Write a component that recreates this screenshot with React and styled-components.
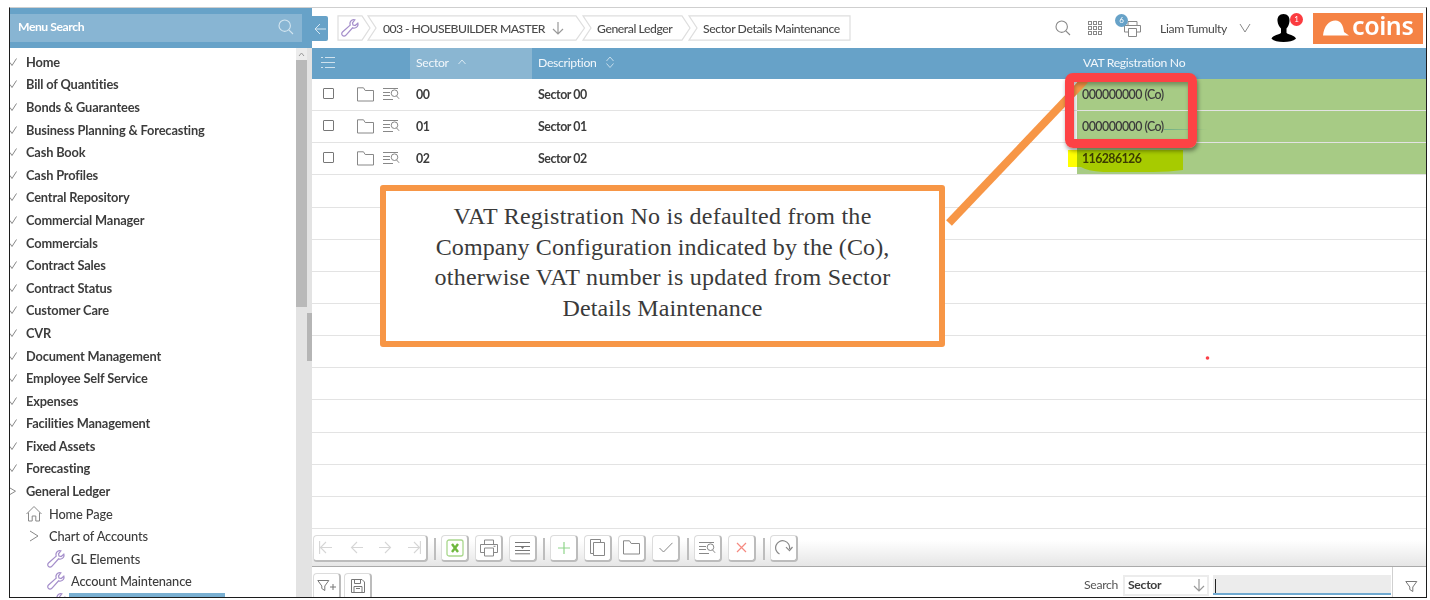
import React from "react";
import styled, { createGlobalStyle, css } from "styled-components";

const Global = createGlobalStyle`
  * { box-sizing: border-box; }
  body { margin: 0; background: #fff; overflow: hidden; }
`;

const blue = "#67a2c8";

const Page = styled.div`
  position: relative;
  width: 1430px;
  height: 600px;
  padding: 7px 3px 2px 9px;
  background: #fff;
  font-family: Lato, "Liberation Sans", sans-serif;
  font-size: 12.8px;
  color: #3c3c3c;
`;
const Frame = styled.div`
  display: flex;
  width: 1418px;
  height: 591px;
  border: 1px solid #1c1c1c;
  border-top-color: #cfcfcf;
  overflow: hidden;
`;
const Sidebar = styled.aside`
  width: 302px;
  flex: none;
  display: flex;
  flex-direction: column;
`;
const SearchHead = styled.div`
  flex: none;
  height: 40px;
  background: ${blue};
  padding: 6px 10px 6px 0;
`;
const SearchBox = styled.div`
  height: 28px;
  background: #88b5d3;
  color: #fff;
  font-weight: 700;
  font-size: 12.2px;
  letter-spacing: -0.45px;
  display: flex;
  align-items: center;
  justify-content: space-between;
  padding: 0 8px 3px 8px;
`;
const MenuBody = styled.div`
  flex: 1;
  min-height: 0;
  display: flex;
`;
const Menu = styled.nav`
  flex: 1;
  padding-top: 2.500px;
  overflow: hidden;
`;
const MenuItem = styled.div`
  height: 22.6px;
  display: flex;
  align-items: center;
  white-space: nowrap;
  font-weight: ${(p) => (p.$depth ? 500 : 700)};
  letter-spacing: ${(p) => (p.$depth ? "-0.13px" : "-0.15px")};
  padding-left: ${(p) => [0, 15, 37][p.$depth]}px;
`;
const MenuIcon = styled.span`
  flex: none;
  width: ${(p) => (p.$depth ? 24 : 16)}px;
  display: flex;
  align-items: center;
`;
const SelectedRow = styled.div`
  display: flex;
  align-items: flex-start;
  padding-left: 38px;
`;
const Selected = styled.div`
  width: 156px;
  height: 10px;
  margin-left: 3px;
  background: #7ab0d2;
`;
const Scroll = styled.div`
  width: 16px;
  background: #e3e3e3;
  display: flex;
  flex-direction: column;
`;
const ScrollUp = styled.div`
  width: 11px;
  height: 12px;
  background: #ececec;
  display: flex;
  align-items: center;
  justify-content: center;
`;
const Thumb = styled.div`
  width: 11px;
  height: 247px;
  background: #b9b9b9;
`;
const Handle = styled.div`
  width: 5px;
  height: 48px;
  margin: 6px 0 0 11px;
  background: #b5b5b5;
`;
const Main = styled.main`
  flex: 1;
  min-width: 0;
  display: flex;
  flex-direction: column;
`;
const TopBar = styled.header`
  flex: none;
  height: 40px;
  display: flex;
  align-items: flex-start;
  padding-top: 7px;
`;
const Back = styled.div`
  width: 16px;
  height: 25px;
  margin-top: 1px;
  background: ${blue};
  border-radius: 0 2px 2px 0;
  display: flex;
  align-items: center;
  justify-content: center;
`;
const Crumbs = styled.div`
  position: relative;
  width: 514px;
  height: 26px;
  margin-left: 9px;
  display: flex;
  align-items: center;
  font-size: 12.2px;
  white-space: nowrap;
  color: #4a4a4a;
`;
const CrumbLines = styled.svg`
  position: absolute;
  inset: 0;
`;
const Crumb = styled.span`
  display: flex;
  align-items: center;
  gap: 7px;
  width: ${(p) => p.$w}px;
  padding-left: ${(p) => p.$pad || 0}px;
  letter-spacing: ${(p) => p.$ls || 0}px;
  font-weight: 500;
`;
const TopRight = styled.div`
  margin-left: auto;
  height: 26px;
  display: flex;
  align-items: center;
  padding-right: 3px;
`;
const IconSlot = styled.span`
  position: relative;
  display: flex;
  flex: none;
  margin-left: ${(p) => p.$ml || 0}px;
`;
const Badge = styled.span`
  position: absolute;
  left: ${(p) => p.$x}px;
  top: ${(p) => p.$y}px;
  width: 13px;
  height: 13px;
  border-radius: 50%;
  background: ${(p) => p.$bg};
  color: #fff;
  font-size: 8px;
  line-height: 13px;
  text-align: center;
`;
const UserName = styled.span`
  margin-left: 19px;
  width: 68px;
  white-space: nowrap;
  font-size: 12.2px;
  letter-spacing: -0.35px;
  color: #4a4a4a;
`;
const Logo = styled.div`
  width: 110px;
  height: 31px;
  margin-left: 17px;
  background: #f58345;
  display: flex;
  align-items: center;
  padding-left: 10px;
  color: #fff;
  font-family: "Noto Sans", sans-serif;
  font-weight: 600;
  font-size: 25px;
  line-height: 25px;
  letter-spacing: -0.4px;
  gap: 2px;
`;
const LogoText = styled.span`
  height: 31px;
`;
const cols = "98px 122px 545px 1fr";
const HeadRow = styled.div`
  flex: none;
  height: 31px;
  display: grid;
  grid-template-columns: ${cols};
  background: ${blue};
  color: #f2f7fb;
  font-size: 12.2px;
  letter-spacing: -0.3px;
`;
const HeadCell = styled.div`
  display: flex;
  align-items: center;
  gap: 9px;
  padding: 0 0 3px 6px;
  background: ${(p) => (p.$on ? "#8ab6d2" : "transparent")};
`;
const Row = styled.div`
  flex: none;
  height: 32.15px;
  display: grid;
  grid-template-columns: ${cols};
  border-bottom: 1px solid #e3e3e3;
  font-weight: 700;
  font-size: 12.4px;
`;
const Cell = styled.div`
  display: flex;
  align-items: center;
  padding: 0 0 0.500px 6px;
  letter-spacing: -0.45px;
  ${(p) => p.$green && css`
    background: #a7cb85;
    padding-left: 5px;
    font-weight: ${p.$b ? 700 : 600};
    letter-spacing: ${p.$b ? -0.6 : -0.53}px;
  `}
`;
const IconCell = styled.div`
  display: flex;
  align-items: center;
  padding: 0 0 1px 11px;
`;
const Check = styled.span`
  width: 11px;
  height: 11px;
  margin: 0 23px 2px 0;
  border: 1px solid #777;
  border-radius: 1px;
`;
const Toolbar = styled.div`
  flex: none;
  height: 38px;
  padding: 6px 0 0 1px;
  border-bottom: 1px solid #aaa;
  background: linear-gradient(#fff 30%, #e6e6e6);
  display: flex;
  align-items: flex-start;
`;
const Btn = styled.span`
  width: ${(p) => p.$w || 28}px;
  height: 27px;
  margin-right: ${(p) => (p.$mr === undefined ? 6 : p.$mr)}px;
  flex: none;
  display: flex;
  align-items: center;
  justify-content: center;
  background: #fff;
  border: 1px solid #dcdcdc;
  border-right: 2px solid #bcbcbc;
  border-bottom: 2px solid #bcbcbc;
  border-radius: 4px;
`;
const Sep = styled.i`
  width: 2px;
  height: 22px;
  margin: 3px 5px 0 0;
  background: #bdbdbd;
`;
const FilterBar = styled.div`
  flex: 1;
  display: flex;
  padding: 6px 0 0 1px;
`;
const SearchLabel = styled.span`
  margin-left: auto;
  width: 39px;
  padding-top: 4.500px;
  font-size: 12.2px;
  letter-spacing: -0.3px;
  color: #555;
`;
const Select = styled.span`
  width: 86px;
  height: 21px;
  margin-top: 2px;
  border: 2px solid #ececec;
  display: flex;
  align-items: center;
  justify-content: space-between;
  padding: 0 2px 1px 3px;
  font-size: 12.2px;
  font-weight: 700;
  letter-spacing: -0.3px;
`;
const Input = styled.span`
  width: 178px;
  height: 20px;
  margin: 2px 1px 0 4px;
  padding: 4px 2px;
  background: #ececec;
  border-bottom: 2px solid #70a9d0;
`;
const Caret = styled.i`
  display: block;
  width: 1px;
  height: 14px;
  background: #222;
`;
const FilterCell = styled.span`
  width: 34px;
  margin-top: -6px;
  border-left: 1px solid #d0d0d0;
  display: flex;
  align-items: center;
  justify-content: center;
  padding: 6px 0 0 4px;
`;
const Callout = styled.div`
  position: absolute;
  left: 380px;
  top: 185px;
  width: 565px;
  height: 162px;
  border: 6px solid #f79646;
  border-radius: 3px;
  background: #fff;
  padding-top: 10px;
  text-align: center;
  font: 24px/30.7px "Liberation Serif", serif;
  color: #3a3a3a;
`;
const Line = styled.div`
  white-space: nowrap;
  letter-spacing: ${(p) => p.$ls || 0}px;
`;
const Ink = styled.svg`
  position: absolute;
  left: 0;
  top: 0;
  pointer-events: none;
  mix-blend-mode: ${(p) => (p.$mul ? "multiply" : "normal")};
`;
const RedBox = styled.div`
  position: absolute;
  left: 1065px;
  top: 73px;
  width: 132px;
  height: 75px;
  border: 9px solid #fd4245;
  border-radius: 8px;
  box-shadow: 1px 3px 4px rgba(0,0,0,.4), inset 1px 3px 4px rgba(0,0,0,.3);
`;

const I = ({ w = 16, h = w, c = "#888", s = 1, vb, children }) => (
  <svg width={w} height={h} viewBox={vb || `0 0 ${w} ${h}`} fill="none" stroke={c} strokeWidth={s}>
    {children}
  </svg>
);
const Search = ({ c }) => <I w={16} c={c} s={1.1}><circle cx="6.7" cy="6.7" r="5.7" /><path d="M10.8 10.8L15 15" /></I>;
const Wrench = ({ w = 18 }) => (
  <I w={w} vb="0 0 18 18" c="#a58fcb" s={1.25}>
    <path d="M16.8 4.200l-2.600 2.300-2.200-.5-.5-2.200L13.800.9C11.600.3 9.400 1.600 9 3.900c-.1.8 0 1.500.2 2.200L1.500 13c-1 1-1 2.500-.1 3.400.9.9 2.400.9 3.400-.1l6.800-7.500c.8.3 1.500.3 2.300.2 2.300-.5 3.600-2.600 2.900-4.800z" />
  </I>
);
const Folder = () => <I w={17} h={15}><path d="M.5 14V.8h6l1.700 2.700h8.300V14z" /></I>;
const Detail = () => <I w={17} h={14}><path d="M0 1.500h15M0 5.500h7M0 8.500h7M0 12.500h10M13.600 9l2.500 2.800" /><circle cx="11.500" cy="6.200" r="3.300" /></I>;
const Printer = () => <I w={18} h={18}><path d="M4.500 5V1h9v4M4.500 13.500h-4V5.500h17v8h-4M4.500 9h9v8h-9zM13.500 7.300h2" /></I>;
const Down = ({ c = "#999" }) => <I w={12} h={14} c={c} s={1.2}><path d="M6 1v12M1 8l5 5 5-5" /></I>;
const Arrow = ({ flip, bar }) => (
  <I w={13} h={15} c="#d6d6d6" s={1.1}>
    <g transform={flip ? "translate(13 0) scale(-1 1)" : undefined}><path d={`M13 7.500H2M7 2L1.500 7.500 7 13${bar ? "M.6 1v13" : ""}`} /></g>
  </I>
);
const Funnel = ({ w = 13 }) => <I w={w} h={13} c="#777"><path d="M.8 1.500h11L7.800 7v4.500l-3-2V7z" />{w > 13 && <path d="M13 8h6M16 5v6" />}</I>;

const top = ["Home", "Bill of Quantities", "Bonds & Guarantees", "Business Planning & Forecasting", "Cash Book", "Cash Profiles", "Central Repository", "Commercial Manager", "Commercials", "Contract Sales", "Contract Status", "Customer Care", "CVR", "Document Management", "Employee Self Service", "Expenses", "Facilities Management", "Fixed Assets", "Forecasting", "General Ledger"];

const rows = [["00", "000000000 (Co)"], ["01", "000000000 (Co)"], ["02", "116286126"]];

export default function App() {
  return (
    <Page>
      <Global />
      <Frame>
        <Sidebar>
          <SearchHead><SearchBox>Menu Search<Search c="#d3e5f0" /></SearchBox></SearchHead>
          <MenuBody>
            <Menu>
              {top.map((t, i) => (
                <MenuItem key={t} $depth={0}>
                  <MenuIcon $depth={0}>
                    <I w={8} h={10}>{i === 19 ? <path d="M0 2l5.500 3.200L0 8.500" /> : <path d="M0 5.500l2 3L6.500 1.500" />}</I>
                  </MenuIcon>
                  {t}
                </MenuItem>
              ))}
              <MenuItem $depth={1}>
                <MenuIcon $depth={1}><I w={18} h={17}><path d="M1.500 9L9 1.500 16.500 9M3.500 7.500V16h3.700v-5h3.600v5h3.700V7.500" /></I></MenuIcon>Home Page
              </MenuItem>
              <MenuItem $depth={1}>
                <MenuIcon $depth={1}><I w={16} h={12}><path d="M5 1l8 5-8 5" /></I></MenuIcon>Chart of Accounts
              </MenuItem>
              <MenuItem $depth={2}><MenuIcon $depth={2}><Wrench /></MenuIcon>GL Elements</MenuItem>
              <MenuItem $depth={2}><MenuIcon $depth={2}><Wrench /></MenuIcon>Account Maintenance</MenuItem>
              <SelectedRow><Wrench /><Selected /></SelectedRow>
            </Menu>
            <Scroll>
              <ScrollUp><I w={7} h={5} c="#999"><path d="M1 4l2.500-3L6 4" /></I></ScrollUp>
              <Thumb />
              <Handle />
            </Scroll>
          </MenuBody>
        </Sidebar>
        <Main>
          <TopBar>
            <Back><I w={12} c="#d7e8f2"><path d="M12 6H1.500M6 1L1 6l5 5" /></I></Back>
            <Crumbs>
              <CrumbLines width="514" height="26" fill="none" stroke="#dedede" strokeWidth="1.2">
                <path d="M1 .8h24l8 12.200-8 12.200H1zM31 .8h208l8.500 12.200-8.500 12.200H31l8-12.200zM246 .8h99l8 12.200-8 12.200h-99l8-12.200zM352 .8h161v24.400H352l8-12.200z" />
              </CrumbLines>
              <Crumb $w={46} $pad={4}><Wrench /></Crumb>
              <Crumb $w={214} $ls={-0.55}>003 - HOUSEBUILDER MASTER<Down /></Crumb>
              <Crumb $w={106} $ls={-0.43}>General Ledger</Crumb>
              <Crumb $w={140} $ls={-0.41}>Sector Details Maintenance</Crumb>
            </Crumbs>
            <TopRight>
              <Search />
              <IconSlot $ml={17}>
                <I w={16} c="#888">
                  {[0, 1, 2].map((y) => [0, 1, 2].map((x) => <rect key={`${x}${y}`} x={x * 5 + 0.500} y={y * 5 + 1.500} width="3" height="3" />))}
                </I>
              </IconSlot>
              <IconSlot $ml={20}>
                <I w={17} h={17}><path d="M4 5V1.500h9V5M4 12H.5V5.500h16V12H13M4.500 8.500h8v8h-8z" /></I>
                <Badge $bg={blue} $x={-9} $y={-6}>6</Badge>
              </IconSlot>
              <UserName>Liam Tumulty</UserName>
              <IconSlot $ml={11}><I w={12} h={10}><path d="M1 1l5 8 5-8" /></I></IconSlot>
              <IconSlot $ml={20}>
                <svg width="25" height="28" viewBox="0 0 25 28"><path d="M12.500 0c4.200 0 6.300 3 6 7-.2 3-1.300 5.800-3 7.500v4.200c1 2 8.500 2.300 9.500 6C22 27 18 28 12.500 28S3 27 .500 24.700c1-3.700 8.500-4 9.500-6v-4.200C8.300 12.800 6.700 10 6.500 7c-.3-4 1.800-7 6-7z" fill="#000" /></svg>
                <Badge $bg="#fb3b3f" $x={19} $y={-1}>1</Badge>
              </IconSlot>
              <Logo>
                <svg width="27" height="17" viewBox="0 0 27 17"><path d="M0 15.500C1 6 6 .500 12.500.500 18 .500 20.500 6 21 12l5 3.500z" fill="#fff" /></svg>
                <LogoText>coins</LogoText>
              </Logo>
            </TopRight>
          </TopBar>
          <HeadRow>
            <HeadCell><I w={20} h={14} c="#cfe2ee"><path d="M3 2.500h2M7 2.500h10M3 7.500h14M3 12.500h2M7 12.500h10" /></I></HeadCell>
            <HeadCell $on>Sector<I w={8} h={6} c="#d8e8f2"><path d="M.5 5L4 1l3.500 4" /></I></HeadCell>
            <HeadCell>Description<I w={8} h={12} c="#c5dcea"><path d="M.5 5L4 1l3.500 4M.5 7.500l3.500 4 3.500-4" /></I></HeadCell>
            <HeadCell>VAT Registration No</HeadCell>
          </HeadRow>
          {rows.map(([n, v], i) => (
            <Row key={n}>
              <IconCell><Check /><Folder /><IconSlot $ml={9}><Detail /></IconSlot></IconCell>
              <Cell>{n}</Cell>
              <Cell>Sector {n}</Cell>
              <Cell $green $b={i === 2}>{v}</Cell>
            </Row>
          ))}
          {Array.from({ length: 11 }, (_, i) => <Row key={i} />)}
          <Toolbar>
            <Btn $w={115}>
              <Arrow bar /><IconSlot $ml={18}><Arrow /></IconSlot><IconSlot $ml={16}><Arrow flip /></IconSlot><IconSlot $ml={16}><Arrow flip bar /></IconSlot>
            </Btn>
            <Sep />
            <Btn><I w={18} c="#a9d78d" s={1.3}><rect x="1" y="1" width="16" height="16" rx="2" /><path d="M6 5l6 8M12 5l-6 8" stroke="#6fb83e" strokeWidth="2.400" /></I></Btn>
            <Btn><Printer /></Btn>
            <Btn><I w={15} h={14} c="#777"><path d="M0 1.500h15M0 5.500h15M0 9.500h15M0 12.800h15" /><path d="M5.500 5.500h4l-2 2.500z" fill="#777" stroke="none" /></I></Btn>
            <Sep />
            <Btn><I w={12} c="#8fd58b" s={1.2}><path d="M6 0v12M0 6h12" /></I></Btn>
            <Btn><I w={16} h={18}><path d="M3.500 14.500H.500V.500h10v3M3.500 3.500h11v13h-11z" /></I></Btn>
            <Btn><Folder /></Btn>
            <Btn $mr={7}><I w={14} h={11}><path d="M.5 6l4 4L13.500.800" /></I></Btn>
            <Sep />
            <Btn><Detail /></Btn>
            <Btn $mr={7}><I w={11} c="#f58a80" s={1.2}><path d="M1 1l9 9M10 1L1 10" /></I></Btn>
            <Sep />
            <Btn><I w={19} h={16} s={1.2}><path d="M5.500 14A7 7 0 1 1 15.500 9M12 7.200l3.500 3.500L18.500 7" /></I></Btn>
          </Toolbar>
          <FilterBar>
            <Btn $mr={3}><Funnel w={19} /></Btn>
            <Btn><I w={14} h={14} c="#777"><path d="M.5.500H11l2.500 2.500v10.500H.500zM3.500.500v4h6v-4M3 13.500v-6h8v6M5 9.500h4" /></I></Btn>
            <SearchLabel>Search</SearchLabel>
            <Select>Sector<Down /></Select>
            <Input><Caret /></Input>
            <FilterCell><Funnel /></FilterCell>
          </FilterBar>
        </Main>
      </Frame>
      <Ink $mul width="1430" height="600"><path d="M1068 150h115v20q-14 2-30 2h-50q-16-1-22-5h-13z" fill="#ff0" /></Ink>
      <Ink width="1430" height="600">
        <defs>
          <linearGradient id="fade"><stop stopColor="#6fae86" /><stop offset="1" stopColor="#a7cb85" /></linearGradient>
        </defs>
        <rect x="1164" y="129" width="44" height="1" fill="url(#fade)" />
        <path d="M949 223L1085 80" stroke="#f79646" strokeWidth="8" />
        <circle cx="1207.500" cy="358" r="1.800" fill="#fb4048" />
      </Ink>
      <RedBox />
      <Callout>
        <Line $ls={0.27}>VAT Registration No is defaulted from the</Line>
        <Line $ls={0.1}>Company Configuration indicated by the (Co),</Line>
        <Line $ls={0.25}>otherwise VAT number is updated from Sector</Line>
        <Line $ls={0.1}>Details Maintenance</Line>
      </Callout>
    </Page>
  );
}
